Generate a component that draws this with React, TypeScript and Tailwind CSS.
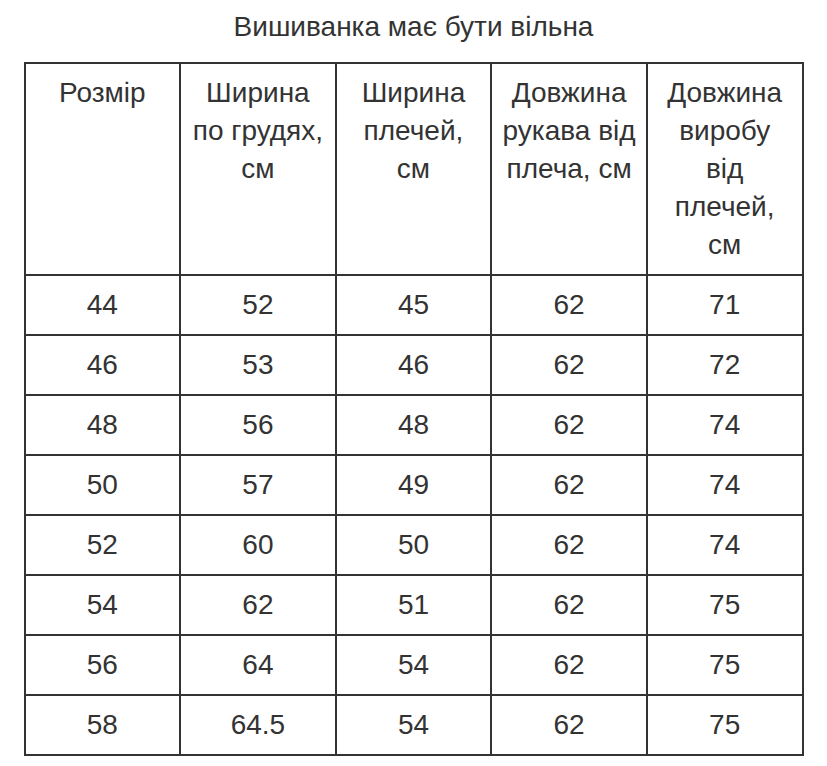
const headers: string[][] = [
  ['Розмір'],
  ['Ширина', 'по грудях,', 'см'],
  ['Ширина', 'плечей,', 'см'],
  ['Довжина', 'рукава від', 'плеча, см'],
  ['Довжина', 'виробу', 'від', 'плечей,', 'см'],
];

const rows: string[][] = [
  ['44', '52', '45', '62', '71'],
  ['46', '53', '46', '62', '72'],
  ['48', '56', '48', '62', '74'],
  ['50', '57', '49', '62', '74'],
  ['52', '60', '50', '62', '74'],
  ['54', '62', '51', '62', '75'],
  ['56', '64', '54', '62', '75'],
  ['58', '64.5', '54', '62', '75'],
];

export default function App() {
  return (
    <div className="min-h-screen bg-white pt-2 text-[28px] text-[#333] font-['Liberation_Sans',Arial,sans-serif]">
      <h1 className="text-center leading-[38px]">Вишиванка має бути вільна</h1>

      <table className="mx-auto mt-[16px] w-[780px] table-fixed border-collapse border-2 border-[#333]">
        <thead>
          <tr>
            {headers.map((lines, i) => (
              <th
                key={i}
                className="h-[212px] border-2 border-[#333] px-1 pt-[10px] pb-[10px] align-top font-normal leading-[38px] whitespace-nowrap"
              >
                {lines.map((line, j) => (
                  <div key={j}>{line}</div>
                ))}
              </th>
            ))}
          </tr>
        </thead>
        <tbody>
          {rows.map((row, r) => (
            <tr key={r}>
              {row.map((cell, c) => (
                <td key={c} className="h-[60px] border-2 border-[#333] text-center align-middle leading-[38px]">
                  {cell}
                </td>
              ))}
            </tr>
          ))}
        </tbody>
      </table>
    </div>
  );
}
